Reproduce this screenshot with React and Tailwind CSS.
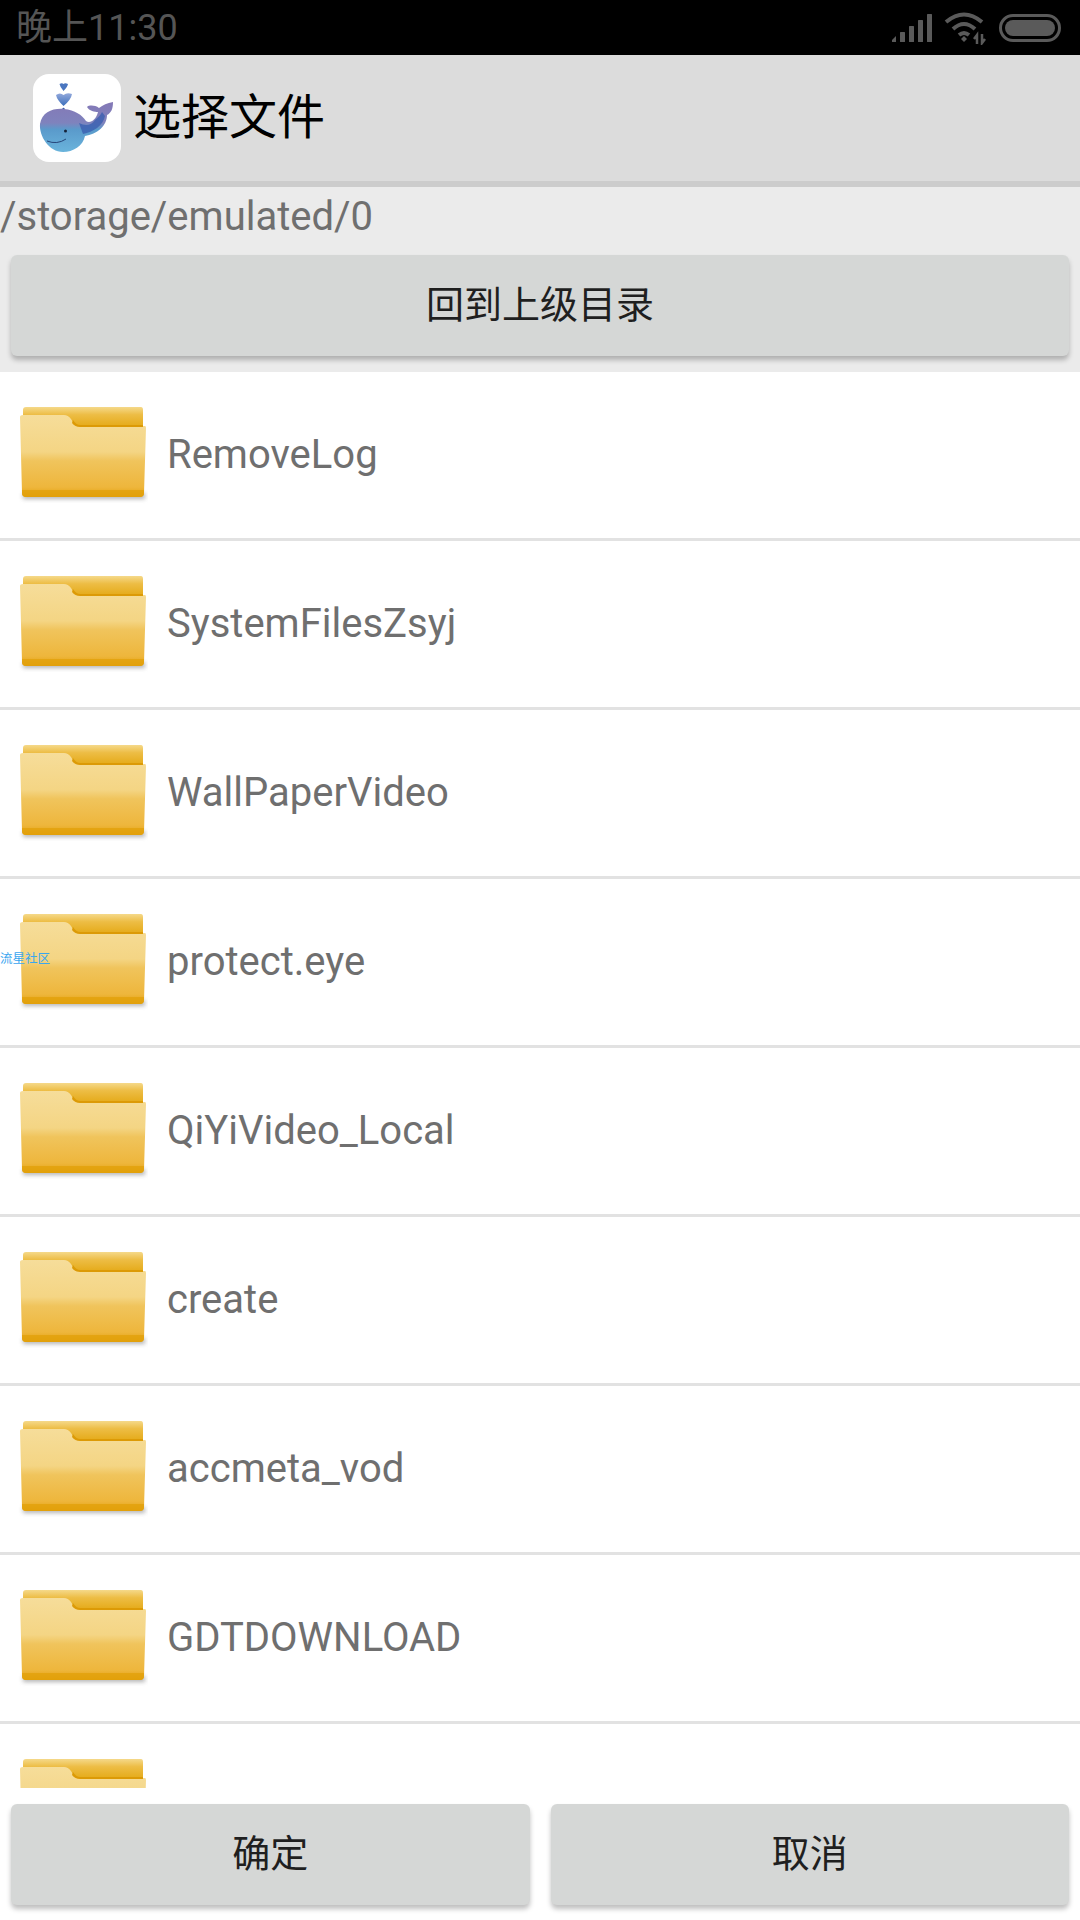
const folders = [
  'RemoveLog',
  'SystemFilesZsyj',
  'WallPaperVideo',
  'protect.eye',
  'QiYiVideo_Local',
  'create',
  'accmeta_vod',
  'GDTDOWNLOAD',
  '',
];

const FolderIcon = ({ id }) => (
  <svg className="w-[130px] h-[100px] shrink-0" viewBox="0 0 130 100">
    <defs>
      <linearGradient id={`back-${id}`} x1="0" y1="0" x2="0" y2="1">
        <stop offset="0" stopColor="#f5d98a" />
        <stop offset="0.35" stopColor="#edbd45" />
        <stop offset="1" stopColor="#e3a60f" />
      </linearGradient>
      <linearGradient id={`front-${id}`} x1="0" y1="0" x2="0" y2="1">
        <stop offset="0" stopColor="#f6dd9a" />
        <stop offset="0.45" stopColor="#f4d584" />
        <stop offset="0.56" stopColor="#f0c45c" />
        <stop offset="0.88" stopColor="#eeb63c" />
        <stop offset="1" stopColor="#e3a00c" />
      </linearGradient>
      <filter id={`blur-${id}`} x="-10%" y="-100%" width="120%" height="300%">
        <feGaussianBlur stdDeviation="2" />
      </filter>
    </defs>
    <rect x="5" y="88" width="122" height="6" fill="#777" opacity="0.55" filter={`url(#blur-${id})`} />
    <path d="M5 5 Q5 2 8 2 H123 Q125 2 125 5 V24 H5 Z" fill={`url(#back-${id})`} />
    <path
      d="M2 12 Q2 10 5 10 H46 Q50 10 53 14 L56 19 Q58 21 62 21 H127 Q128 21 128 23 L126 88 Q126 92 122 92 H8 Q4 92 4 88 Z"
      fill={`url(#front-${id})`}
    />
    <path d="M4 88 Q4 92 8 92 H122 Q126 92 126 88 V85 H4 Z" fill="#e2a009" opacity="0.75" />
    <path d="M54 18 Q57 22 62 22 H125 V20 H62 Q58 20 55 15 Z" fill="#dc9a06" />
  </svg>
);

const WhaleLogo = () => (
  <div className="w-[88px] h-[88px] rounded-[16px] bg-white flex items-center justify-center shrink-0">
    <svg className="w-[88px] h-[88px]" viewBox="0 0 88 88">
      <defs>
        <linearGradient id="whale" x1="0" y1="0" x2="0" y2="1">
          <stop offset="0" stopColor="#8478b6" />
          <stop offset="0.42" stopColor="#7f83bd" />
          <stop offset="0.55" stopColor="#5a9acb" />
          <stop offset="1" stopColor="#6ab4dc" />
        </linearGradient>
        <linearGradient id="heart" x1="0" y1="0" x2="0" y2="1">
          <stop offset="0" stopColor="#93a9dc" />
          <stop offset="1" stopColor="#3c6fbb" />
        </linearGradient>
      </defs>
      <path d="M26.500 10 Q29 8.500 30.500 10 Q32 8.500 35 10 Q34.500 13 30.500 17 Q27 13 26.500 10 Z" fill="#4a76c0" />
      <path d="M23 21 Q27 18 30.500 21 Q34 18 39 20 Q38 26 30.500 32 Q24 26 23 21 Z" fill="url(#heart)" />
      <circle cx="30.500" cy="35" r="1.200" fill="#3a5aa8" />
      <path
        d="M7 50 C9 38 20 34 31 35 C42 36 49 41 53 47 C57 50 63 46 65 38 C62 38 56 37 54 33 C56 31 62 31 66 34 C70 31 74 29 80 28 C80 35 78 39 74 41 C74 52 64 60 52 62 C50 72 40 78 30 78 C16 78 6 62 7 50 Z"
        fill="url(#whale)"
      />
      <path d="M46 49 C52 52 58 52 62 46 C66 43 68 40 69 38 L72 42 C70 52 60 58 50 60 Z" fill="#3b5fb0" opacity="0.8" />
      <circle cx="32.500" cy="57" r="1.500" fill="#152238" />
      <path d="M14 67 Q24 71 33 65" fill="none" stroke="#1f3a6e" strokeWidth="0.900" />
    </svg>
  </div>
);

const SignalIcon = () => (
  <svg className="w-[42px] h-[30px]" viewBox="0 0 42 30" fill="#5a5a5a">
    <path d="M1 27 L5 23 V29 H1 Z" />
    <rect x="9" y="19" width="5" height="10" rx="0.500" />
    <rect x="18" y="13" width="5" height="16" rx="0.500" />
    <rect x="27" y="7" width="5" height="22" rx="0.500" />
    <rect x="36" y="1" width="5" height="28" rx="0.500" />
  </svg>
);

const WifiIcon = () => (
  <svg className="w-[44px] h-[34px]" viewBox="0 0 44 34" fill="none" stroke="#5a5a5a" strokeWidth="4">
    <path d="M2 11 Q20 -4 38 11" />
    <path d="M9 18 Q20 8 31 18" />
    <path d="M15 24 Q20 20 25 24" />
    <path d="M17 28 L20 25 L23 28 L20 31 Z" fill="#5a5a5a" stroke="none" />
    <path d="M33 33 V24 L30 28 M38 23 V32 L41 28" strokeWidth="2.500" />
  </svg>
);

const BatteryIcon = () => (
  <div className="w-[62px] h-[28px] rounded-full border-[3px] border-[#5a5a5a] p-[3px] flex">
    <div className="flex-1 rounded-full bg-[#5a5a5a]" />
  </div>
);

const GrayButton = ({ children, className }) => (
  <button
    className={`h-[101px] rounded-[6px] bg-[#d5d7d6] text-[#1f1f1f] text-[38px] shadow-[0_4px_5px_rgba(0,0,0,0.25)] ${className}`}
  >
    {children}
  </button>
);

const App = () => {
  return (
    <div className="w-[1080px] h-[1920px] flex flex-col bg-white overflow-hidden font-['Roboto','Noto_Sans_CJK_SC',sans-serif]">
      <div className="h-[55px] bg-black flex items-center justify-between pl-[16px] pr-[19px] shrink-0">
        <span className="text-[36px] text-[#555555] leading-none">晚上11:30</span>
        <div className="flex items-center gap-[11px]">
          <SignalIcon />
          <WifiIcon />
          <BatteryIcon />
        </div>
      </div>

      <div className="h-[132px] bg-[#dcdcdc] border-b-[6px] border-[#cccccc] flex items-center pl-[33px] gap-[12px] shrink-0">
        <WhaleLogo />
        <span className="text-[48px] text-black leading-none">选择文件</span>
      </div>

      <div className="h-[185px] bg-[#ebebeb] shrink-0 flex flex-col">
        <div className="h-[56px] text-[40px] leading-[56px] text-[#6f6f6f] mt-[2px]">/storage/emulated/0</div>
        <div className="px-[11px] mt-[10px]">
          <GrayButton className="w-full">回到上级目录</GrayButton>
        </div>
      </div>

      <div className="relative flex-1 overflow-hidden">
        {folders.map((name, i) => (
          <div key={i} className="h-[169px] border-b-[3px] border-[#e2e2e2] flex items-center pl-[18px] gap-[19px]">
            <FolderIcon id={i} />
            <span className="text-[40px] text-[#6f6f6f] leading-none">{name}</span>
          </div>
        ))}
        <span className="absolute left-0 top-[581px] text-[12.500px] leading-none text-[#3aa6ef]">流星社区</span>
      </div>

      <div className="h-[132px] bg-white shrink-0 flex gap-[21px] px-[11px] pt-[16px]">
        <GrayButton className="flex-1">确定</GrayButton>
        <GrayButton className="flex-1">取消</GrayButton>
      </div>
    </div>
  );
};

export default App;
